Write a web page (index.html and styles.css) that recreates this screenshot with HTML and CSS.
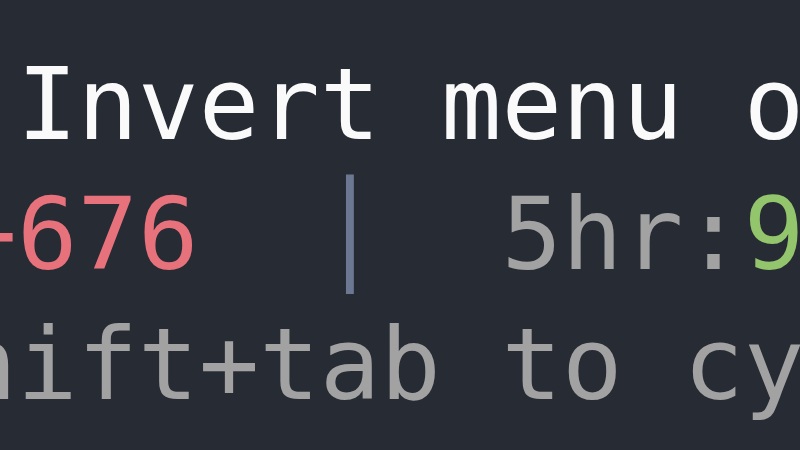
FILE: index.html
```html
<!DOCTYPE html>
<html lang="en">
<head>
<meta charset="utf-8">
<title>Terminal</title>
<link rel="stylesheet" href="styles.css">
</head>
<body>
<div class="term">
  <div class="line bright"> Invert menu o</div>
  <div class="line"><span class="red">−676</span>  <span class="sep">│</span>  <span class="dim">5hr:</span><span class="green">9</span></div>
  <div class="line dim">hift+tab to cy</div>
</div>
</body>
</html>
```
FILE: styles.css
```css
html, body {
  margin: 0;
  padding: 0;
  width: 800px;
  height: 450px;
  overflow: hidden;
  background: #272b34;
}
.term {
  padding-top: 40px;
  margin-left: -43.6px;
  font-family: "DejaVu Sans Mono", monospace;
  font-size: 100.6px;
  line-height: 130px;
}
.line {
  height: 130px;
  white-space: pre;
}
.bright { color: #fafafa; }
.red { color: #e8727c; }
.green { color: #92c56c; }
.dim { color: #a2a2a2; }
.sep { color: #6c7792; }
```
